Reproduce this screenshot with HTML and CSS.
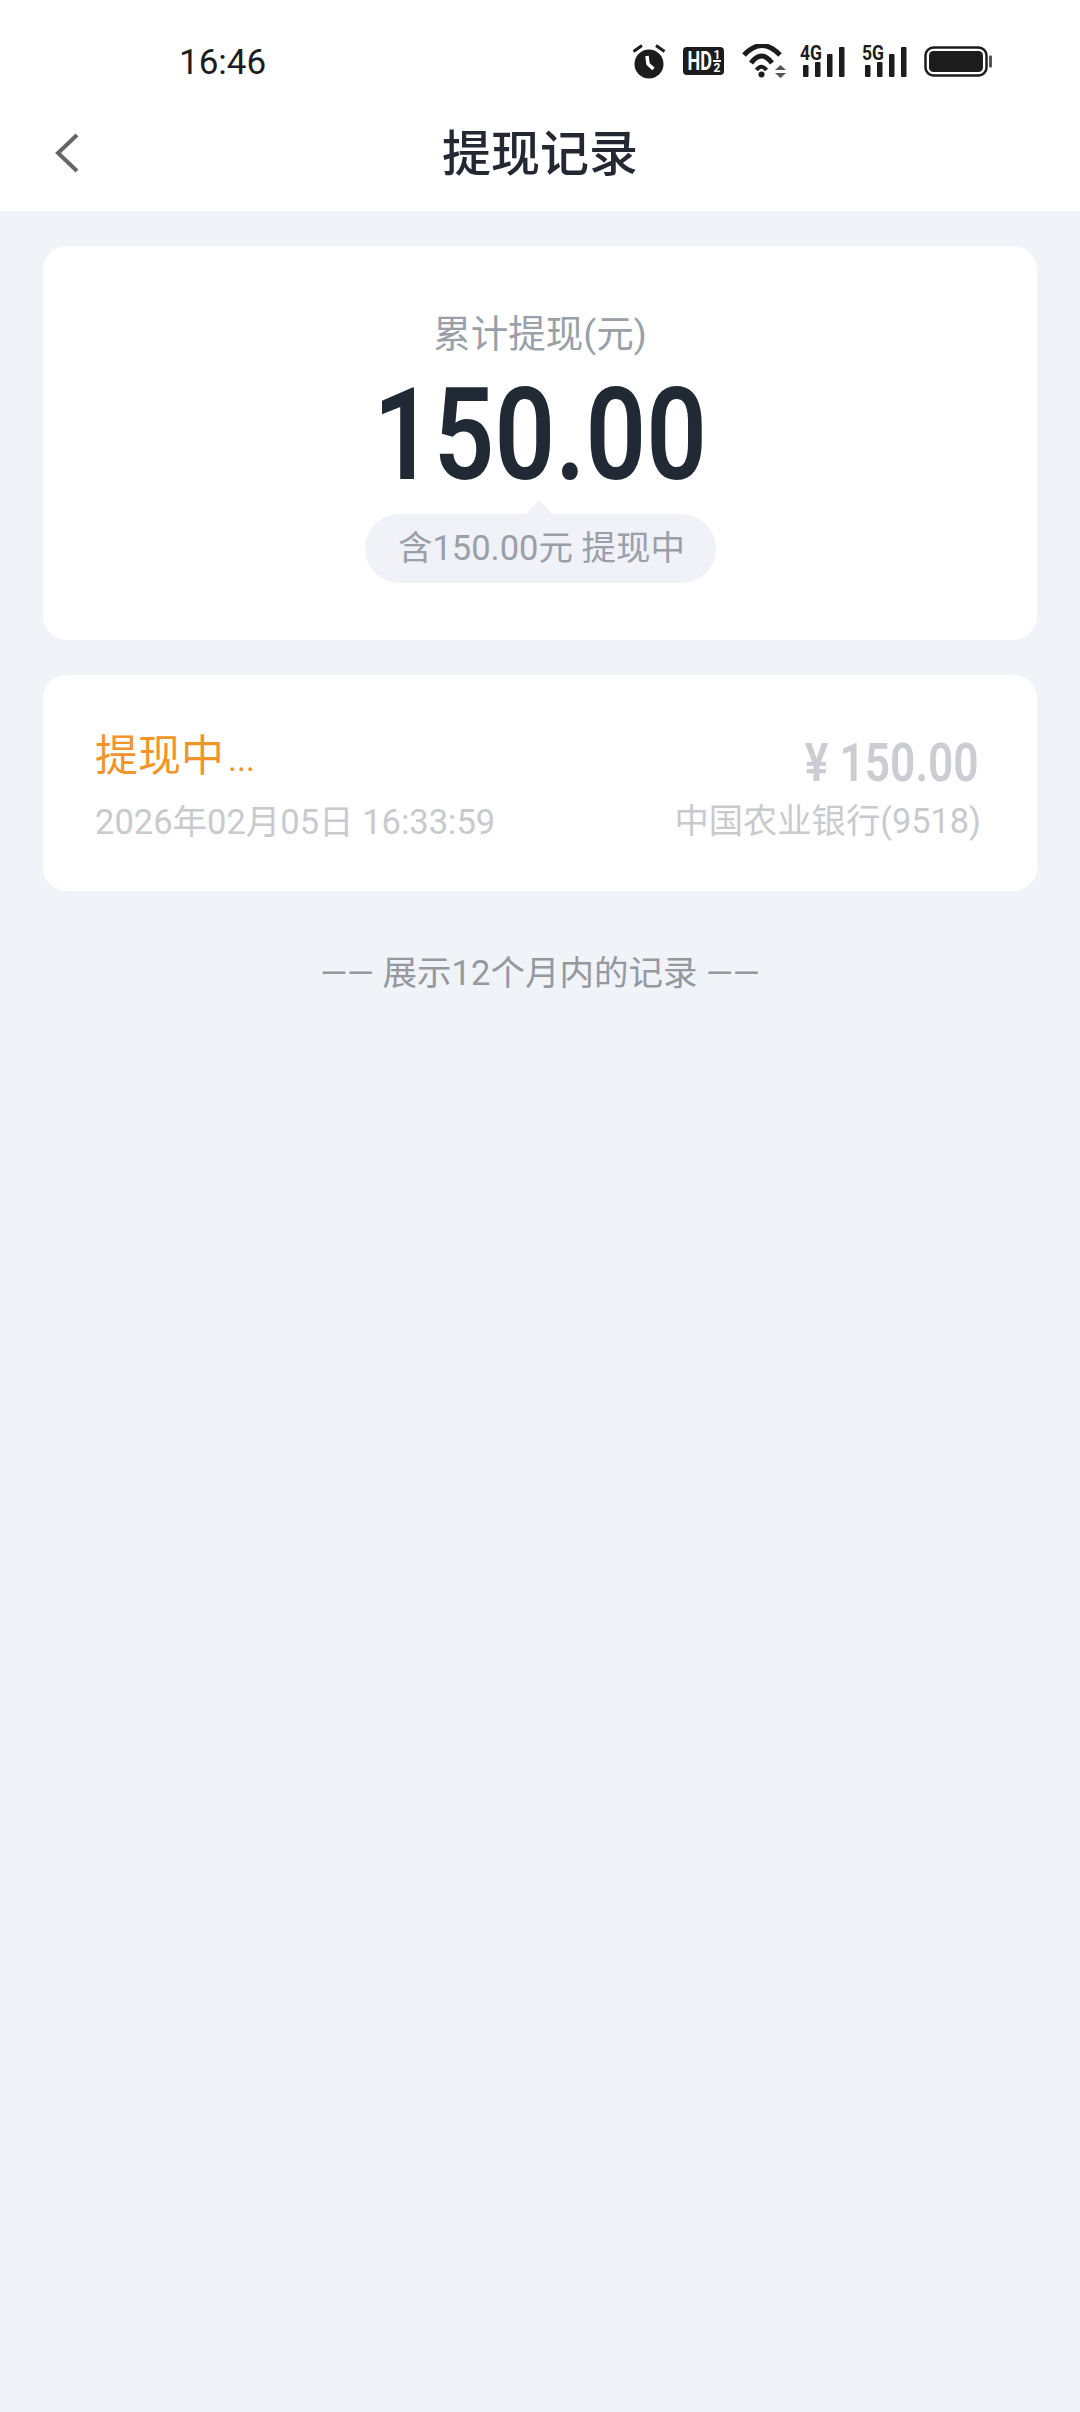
FILE: index.html
```html
<!DOCTYPE html>
<html lang="zh-CN">

<head>
    <meta charset="UTF-8">
    <title>提现记录</title>
    <link rel="stylesheet" href="styles.css">
</head>

<body>
    <div class="status-bar">
        <span class="time">16:46</span>
        <div class="status-icons">
            <svg class="icon-alarm" width="33" height="36" viewBox="0 0 33 36">
                <circle cx="16" cy="21" r="14.500" fill="#1c1c1c" />
                <path d="M0.500 8.500 L9 2.500 M31.500 8.500 L23 2.500" stroke="#1c1c1c" stroke-width="3" fill="none" />
                <path d="M14 13 L15 21 L20.500 26" stroke="#fff" stroke-width="3.500" fill="none" />
            </svg>
            <svg class="icon-hd" width="41" height="28" viewBox="0 0 41 28">
                <rect width="41" height="28" rx="4" fill="#1c1c1c" />
                <text transform="translate(4.500 22.500) scale(.72 1)" class="hd-text">HD</text>
                <text x="30.500" y="11.500" class="hd-small">1</text>
                <rect x="30" y="13" width="8" height="2" fill="#fff" />
                <text x="30.500" y="25" class="hd-small">2</text>
            </svg>
            <svg class="icon-wifi" width="46" height="35" viewBox="0 0 46 35">
                <path d="M3 11 Q21 -8 39 11" stroke="#1c1c1c" stroke-width="5" fill="none" />
                <path d="M10 19 Q20.500 5 31 19" stroke="#1c1c1c" stroke-width="5" fill="none" />
                <path d="M15.500 26 Q20.500 19.500 25.500 26" stroke="#1c1c1c" stroke-width="4" fill="none" />
                <circle cx="20.500" cy="30.500" r="3" fill="#1c1c1c" />
                <path d="M34 26 L39.500 21 L45 26 Z M34 29 L45 29 L39.500 34 Z" fill="#555" />
            </svg>
            <svg class="icon-signal" width="47" height="50" viewBox="0 -8 47 50">
                <text x="0" y="16" class="net-text" textLength="22" lengthAdjust="spacingAndGlyphs">4G</text>
                <rect x="3" y="21" width="5.500" height="12" rx="1" fill="#1c1c1c" />
                <rect x="15" y="18" width="5.500" height="15" rx="1" fill="#1c1c1c" />
                <rect x="27" y="10" width="5.500" height="23" rx="1" fill="#1c1c1c" />
                <rect x="39" y="3" width="5.500" height="30" rx="1" fill="#1c1c1c" />
            </svg>
            <svg class="icon-signal" width="47" height="50" viewBox="0 -8 47 50">
                <text x="0" y="16" class="net-text" textLength="22" lengthAdjust="spacingAndGlyphs">5G</text>
                <rect x="3" y="21" width="5.500" height="12" rx="1" fill="#1c1c1c" />
                <rect x="15" y="18" width="5.500" height="15" rx="1" fill="#1c1c1c" />
                <rect x="27" y="10" width="5.500" height="23" rx="1" fill="#1c1c1c" />
                <rect x="39" y="3" width="5.500" height="30" rx="1" fill="#1c1c1c" />
            </svg>
            <svg class="icon-battery" width="68" height="31" viewBox="0 0 68 31">
                <rect x="1.500" y="1.500" width="61" height="28" rx="8" stroke="#1c1c1c" stroke-width="2.500" fill="none" />
                <rect x="5" y="5" width="54" height="21" rx="4.500" fill="#1c1c1c" />
                <rect x="65" y="9.500" width="3" height="12" rx="1" fill="#555" />
            </svg>
        </div>
    </div>

    <div class="nav-bar">
        <svg class="back" width="25" height="40" viewBox="0 0 25 40">
            <path d="M22 2 L3 20 L22 38" stroke="#666" stroke-width="4" fill="none" />
        </svg>
        <h1 class="nav-title">提现记录</h1>
    </div>

    <div class="content">
        <div class="card summary">
            <div class="summary-label">累计提现(元)</div>
            <div class="summary-amount">150.00</div>
            <div class="pill">含150.00元 提现中</div>
        </div>

        <div class="card record">
            <div class="record-left">
                <div class="record-status">提现中<span class="dots">...</span></div>
                <div class="record-sub">2026年02月05日 16:33:59</div>
            </div>
            <div class="record-right">
                <div class="record-amount">¥ 150.00</div>
                <div class="record-sub">中国农业银行(9518)</div>
            </div>
        </div>

        <div class="footer-note">—— 展示12个月内的记录 ——</div>
    </div>
</body>

</html>
```

FILE: styles.css
```css
body {
    margin: 0;
    min-height: 2412px;
    font-family: Roboto, "Noto Sans CJK SC", sans-serif;
    background-color: #f0f3f8;
}

.status-bar {
    display: flex;
    justify-content: space-between;
    align-items: center;
    height: 100px;
    padding: 22px 88px 0 179px;
    box-sizing: border-box;
    background-color: #fff;
}

.time {
    margin-top: 3px;
    font-size: 35px;
    color: #1c1c1c;
}

.status-icons {
    display: flex;
    align-items: center;
    gap: 15px;
}

.status-icons svg {
    display: block;
}

.icon-alarm,
.icon-hd {
    margin-right: 2px;
}

.icon-wifi {
    margin-right: -2px;
}

.hd-text {
    font: 700 25px Roboto, sans-serif;
    fill: #fff;
}

.hd-small {
    font: 700 12px Roboto, sans-serif;
    fill: #fff;
}

.net-text {
    font: 700 21px Roboto, sans-serif;
    fill: #1c1c1c;
}

.nav-bar {
    position: relative;
    display: flex;
    justify-content: center;
    align-items: center;
    height: 111px;
    background-color: #fff;
}

.back {
    position: absolute;
    left: 55px;
    top: 33px;
}

.nav-title {
    margin: 0 0 13px;
    font-size: 49px;
    font-weight: 500;
    color: #232832;
}

.content {
    padding: 35px 43px;
}

.card {
    background-color: #fff;
    border-radius: 24px;
}

.summary {
    display: flex;
    flex-direction: column;
    align-items: center;
    height: 394px;
    padding-top: 63px;
    box-sizing: border-box;
}

.summary-label {
    font-size: 37.500px;
    line-height: 50px;
    color: #9a9fa8;
}

.summary-amount {
    height: 146px;
    margin-top: 3px;
    font-size: 128px;
    line-height: 146px;
    font-weight: 600;
    color: #212934;
    transform: scaleX(.83);
}

.pill {
    position: relative;
    width: 351px;
    margin-top: 6px;
    padding-left: 3px;
    box-sizing: border-box;
    font-size: 34.500px;
    line-height: 69px;
    text-align: center;
    color: #9a9fa8;
    background-color: #f0f2f7;
    border-radius: 35px;
}

.pill::before {
    content: "";
    position: absolute;
    left: 50%;
    top: -14px;
    margin-left: -14px;
    border-left: 13px solid transparent;
    border-right: 13px solid transparent;
    border-bottom: 14px solid #f0f2f7;
}

.record {
    display: flex;
    justify-content: space-between;
    height: 216px;
    margin-top: 35px;
    padding: 51px 56px 0 52px;
    box-sizing: border-box;
}

.record-status {
    font-size: 43px;
    line-height: 60px;
    color: #f0952b;
}

.dots {
    margin-left: 4px;
    font-size: 34px;
}

.record-sub {
    margin-top: 8px;
    font-size: 34.500px;
    line-height: 50px;
    color: #c8cace;
}

.record-right {
    padding-top: 7px;
    text-align: right;
}

.record-right .record-sub {
    margin-top: 3px;
    font-size: 34.300px;
}

.record-amount {
    margin-right: 2px;
    font-size: 54px;
    line-height: 60px;
    font-weight: 600;
    color: #cbcdd2;
    transform: scaleX(.82);
    transform-origin: right center;
}

.footer-note {
    margin-top: 58px;
    text-align: center;
    font-size: 34.500px;
    line-height: 48px;
    color: #96989e;
}
```
